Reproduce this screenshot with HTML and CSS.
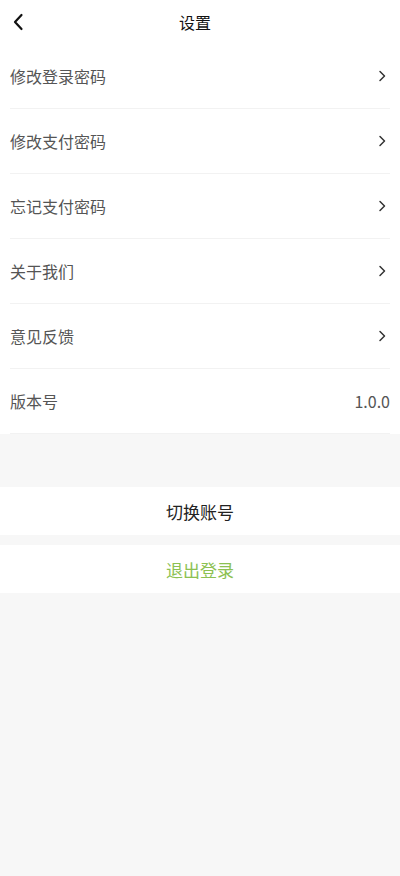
FILE: index.html
```html
<!DOCTYPE html>
<html lang="zh">
<head>
<meta charset="utf-8">
<title>设置</title>
<link rel="stylesheet" href="styles.css">
</head>
<body>
<div class="page">
  <header class="nav">
    <span class="back">
      <svg width="12" height="18" viewBox="0 0 12 18"><path d="M9.5 2 L3 9 L9.5 16" fill="none" stroke="#111" stroke-width="2.2" stroke-linecap="round" stroke-linejoin="round"/></svg>
    </span>
    <h1 class="title">设置</h1>
  </header>
  <ul class="list">
    <li class="row"><span>修改登录密码</span><svg class="chev" width="8" height="12" viewBox="0 0 8 12"><path d="M2 1.5 L6.5 6 L2 10.5" fill="none" stroke="#333" stroke-width="1.5" stroke-linecap="round" stroke-linejoin="round"/></svg></li>
    <li class="row"><span>修改支付密码</span><svg class="chev" width="8" height="12" viewBox="0 0 8 12"><path d="M2 1.5 L6.5 6 L2 10.5" fill="none" stroke="#333" stroke-width="1.5" stroke-linecap="round" stroke-linejoin="round"/></svg></li>
    <li class="row"><span>忘记支付密码</span><svg class="chev" width="8" height="12" viewBox="0 0 8 12"><path d="M2 1.5 L6.5 6 L2 10.5" fill="none" stroke="#333" stroke-width="1.5" stroke-linecap="round" stroke-linejoin="round"/></svg></li>
    <li class="row"><span>关于我们</span><svg class="chev" width="8" height="12" viewBox="0 0 8 12"><path d="M2 1.5 L6.5 6 L2 10.5" fill="none" stroke="#333" stroke-width="1.5" stroke-linecap="round" stroke-linejoin="round"/></svg></li>
    <li class="row"><span>意见反馈</span><svg class="chev" width="8" height="12" viewBox="0 0 8 12"><path d="M2 1.5 L6.5 6 L2 10.5" fill="none" stroke="#333" stroke-width="1.5" stroke-linecap="round" stroke-linejoin="round"/></svg></li>
    <li class="row"><span>版本号</span><span class="ver">1.0.0</span></li>
  </ul>
  <div class="btn switch">切换账号</div>
  <div class="btn logout">退出登录</div>
</div>
</body>
</html>
```
FILE: styles.css
```css
* { box-sizing: border-box; }
html, body { margin: 0; padding: 0; background: #f7f7f7; }
body { font-family: "Noto Sans CJK SC", "Noto Sans", sans-serif; width: 400px; min-height: 876px; }
.page { display: flex; flex-direction: column; }
.nav { height: 44px; background: #fff; display: flex; align-items: center; justify-content: center; position: relative; padding-right: 10px; }
.back { position: absolute; left: 12px; top: 13px; display: flex; }
.title { margin: 0; font-size: 16px; font-weight: normal; color: #111; line-height: 1; }
.list { list-style: none; margin: 0; padding: 0 10px; background: #fff; }
.row { height: 65px; border-bottom: 1px solid #f2f2f2; display: flex; align-items: center; justify-content: space-between; font-size: 16px; color: #555; padding-right: 4px; }
.row .ver { color: #555; margin-right: -4px; }
.chev { display: block; }
.btn { height: 48px; background: #fff; display: flex; align-items: center; justify-content: center; font-size: 17px; }
.switch { margin-top: 53px; color: #222; }
.logout { margin-top: 10px; color: #8cc152; }
```
